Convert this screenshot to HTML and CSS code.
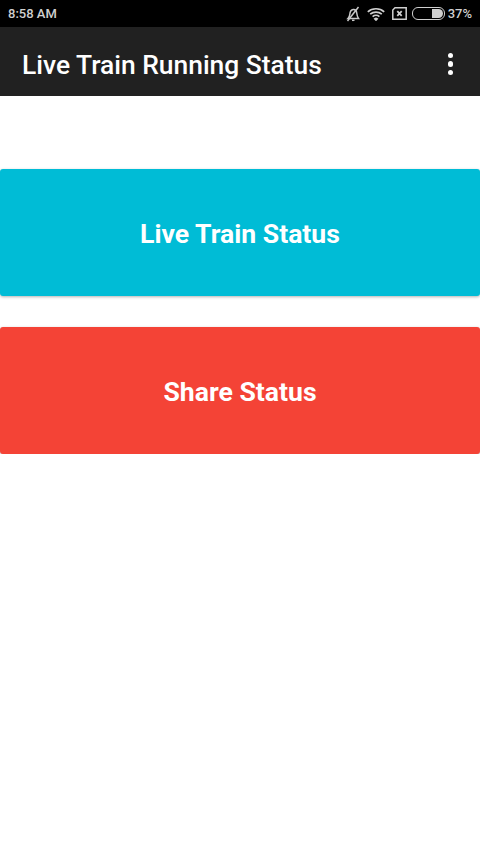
FILE: index.html
```html
<!DOCTYPE html>
<html lang="en">
<head>
    <meta charset="UTF-8">
    <meta name="viewport" content="width=device-width, initial-scale=1.0">
    <title>Live Train Running Status</title>
    <link rel="stylesheet" href="styles.css">
</head>
<body>
    <div class="status-bar">
        <span class="status-time">8:58 AM</span>
        <div class="status-icons">
            <!-- muted bell -->
            <svg class="icon-bell" width="16" height="16" viewBox="0 0 16 16" fill="none" stroke="#c8c8c8" stroke-width="1.5">
                <path d="M3 12.500c1.200-1.200 1.600-2.400 1.800-4.200C5 5.800 6 3.800 8.200 3.500c2-.2 3.300 1.300 3.500 3.300.2 2 .5 4 1.800 5.700z"/>
                <path d="M7 14.300h2.500"/>
                <path d="M2.500 15L13.500 1"/>
            </svg>
            <!-- wifi -->
            <svg class="icon-wifi" width="18" height="14" viewBox="0 0 18 14" fill="none" stroke="#d0d0d0" stroke-width="1.7">
                <path d="M.8 4.800C5.300.700 12.700.700 17.200 4.800"/>
                <path d="M3.200 7.200c3.200-2.900 8.400-2.900 11.600 0"/>
                <path d="M5.600 9.600c1.900-1.700 4.900-1.700 6.800 0"/>
                <path d="M7.800 11.800c.7-.6 1.700-.6 2.400 0L9 13z" fill="#d0d0d0"/>
            </svg>
            <!-- no sim -->
            <svg class="icon-sim" width="15" height="13" viewBox="0 0 15 13" fill="none" stroke="#d0d0d0">
                <path d="M3 .8h11.200v11.400H.8V3z" stroke-width="1.500"/>
                <path d="M5.300 4.200l4.400 4.600M9.700 4.200L5.300 8.800" stroke-width="1.800"/>
            </svg>
            <div class="battery"><div class="battery-fill"></div></div>
            <span class="status-percent">37%</span>
        </div>
    </div>
    <div class="app-bar">
        <h1 class="app-title">Live Train Running Status</h1>
        <div class="menu-dots">
            <span class="dot"></span>
            <span class="dot"></span>
            <span class="dot"></span>
        </div>
    </div>
    <div class="content">
        <button class="big-button button-blue">Live Train Status</button>
        <button class="big-button button-red">Share Status</button>
    </div>
</body>
</html>
```

FILE: styles.css
```css
body {
    margin: 0;
    background-color: #fff;
    font-family: Roboto, sans-serif;
}
.status-bar {
    height: 27px;
    background-color: #000;
    color: #d0d0d0;
    display: flex;
    align-items: center;
    justify-content: space-between;
    padding: 0 8px;
    font-size: 13px;
    font-weight: 500;
}
.status-icons {
    display: flex;
    align-items: center;
}
.icon-bell {
    margin-right: 6px;
}
.icon-wifi {
    margin-right: 7px;
}
.icon-sim {
    margin-right: 5px;
}
.battery {
    width: 29px;
    height: 9px;
    border: 1px solid #d0d0d0;
    border-radius: 6px;
    margin-right: 3px;
    display: flex;
    justify-content: flex-end;
    padding: 1px;
}
.battery-fill {
    width: 11px;
    background-color: #d0d0d0;
    border-radius: 0 5px 5px 0;
}
.app-bar {
    height: 69px;
    box-sizing: border-box;
    background-color: #212121;
    display: flex;
    align-items: center;
    justify-content: space-between;
    padding: 5px 27px 0 22px;
}
.app-title {
    margin: 0;
    padding-top: 2px;
    color: #fff;
    font-size: 26.4px;
    font-weight: 500;
}
.menu-dots {
    display: flex;
    flex-direction: column;
    gap: 3px;
}
.dot {
    width: 5.5px;
    height: 5.5px;
    border-radius: 50%;
    background-color: #fff;
}
.content {
    padding-top: 73px;
    display: flex;
    flex-direction: column;
    gap: 31px;
}
.big-button {
    height: 127px;
    padding-top: 2px;
    border: none;
    border-radius: 3px;
    color: #fff;
    font-family: Roboto, sans-serif;
    font-size: 26.6px;
    font-weight: 700;
    box-shadow: 0 1px 3px rgba(0, 0, 0, 0.3);
}
.button-blue {
    background-color: #00bcd6;
}
.button-red {
    background-color: #f44336;
}
```
